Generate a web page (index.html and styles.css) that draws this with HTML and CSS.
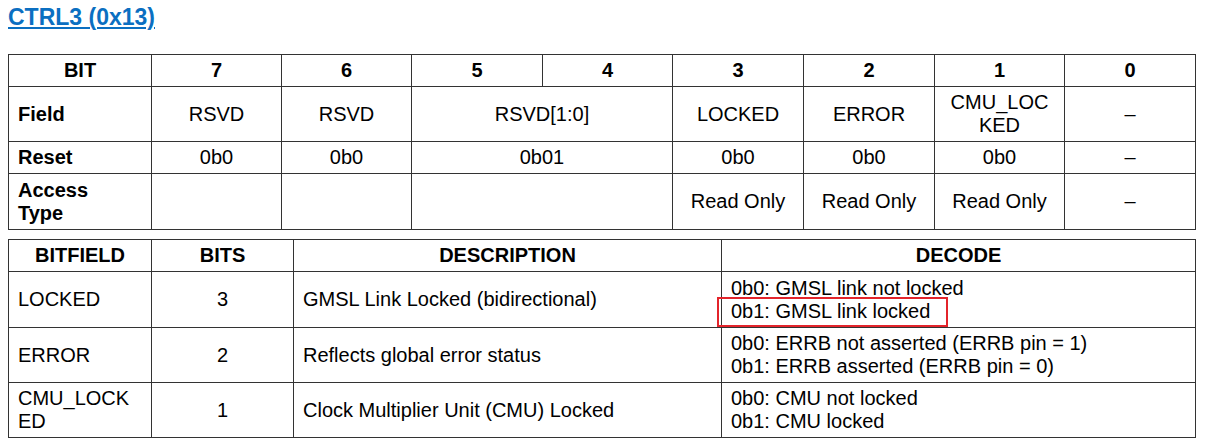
FILE: index.html
```html
<!DOCTYPE html>
<html>
<head>
<meta charset="utf-8">
<link rel="stylesheet" href="styles.css">
</head>
<body>
<div class="page">
  <h2 class="title"><a href="#">CTRL3 (0x13)</a></h2>

  <table class="reg bits">
    <colgroup>
      <col class="c-label"><col class="c130"><col class="c130"><col class="c131"><col class="c130"><col class="c131"><col class="c131"><col class="c130"><col class="c131">
    </colgroup>
    <tr class="r32 head">
      <th>BIT</th><th>7</th><th>6</th><th>5</th><th>4</th><th>3</th><th>2</th><th>1</th><th>0</th>
    </tr>
    <tr class="r55">
      <th class="lbl">Field</th><td>RSVD</td><td>RSVD</td><td colspan="2">RSVD[1:0]</td><td>LOCKED</td><td>ERROR</td><td>CMU_LOC<br>KED</td><td>–</td>
    </tr>
    <tr class="r32">
      <th class="lbl">Reset</th><td>0b0</td><td>0b0</td><td colspan="2">0b01</td><td>0b0</td><td>0b0</td><td>0b0</td><td>–</td>
    </tr>
    <tr class="r56">
      <th class="lbl">Access<br>Type</th><td></td><td></td><td colspan="2"></td><td>Read Only</td><td>Read Only</td><td>Read Only</td><td>–</td>
    </tr>
  </table>

  <table class="reg fields">
    <colgroup>
      <col class="f1"><col class="f2"><col class="f3"><col class="f4">
    </colgroup>
    <tr class="r32 head">
      <th>BITFIELD</th><th>BITS</th><th>DESCRIPTION</th><th>DECODE</th>
    </tr>
    <tr class="r56">
      <td class="left">LOCKED</td><td>3</td><td class="left">GMSL Link Locked (bidirectional)</td>
      <td class="left">0b0: GMSL link not locked<br><span class="mark">0b1: GMSL link locked</span></td>
    </tr>
    <tr class="r55">
      <td class="left">ERROR</td><td>2</td><td class="left">Reflects global error status</td>
      <td class="left">0b0: ERRB not asserted (ERRB pin = 1)<br>0b1: ERRB asserted (ERRB pin = 0)</td>
    </tr>
    <tr class="r55">
      <td class="left">CMU_LOCK<br>ED</td><td>1</td><td class="left">Clock Multiplier Unit (CMU) Locked</td>
      <td class="left">0b0: CMU not locked<br>0b1: CMU locked</td>
    </tr>
  </table>
</div>
</body>
</html>
```

FILE: styles.css
```css
html, body {
  margin: 0;
  padding: 0;
  background: #ffffff;
}

body {
  font-family: "Liberation Sans", Arial, sans-serif;
  font-size: 20px;
  color: #000000;
}

.page {
  padding: 4px 8px 0 8px;
}

.title {
  margin: 0 0 24px 0;
  font-size: 23px;
  line-height: 26px;
  font-weight: bold;
}

.title a {
  color: #0b6fc1;
  text-decoration: underline;
  text-decoration-thickness: 2px;
  text-underline-offset: 2px;
}

.reg {
  border-collapse: collapse;
  table-layout: fixed;
  width: 1188px;
}

.reg th,
.reg td {
  border: 1px solid #333333;
  padding: 0 10px;
  text-align: center;
  vertical-align: middle;
  line-height: 23px;
  font-weight: normal;
  white-space: nowrap;
}

.reg .head th {
  font-weight: bold;
}

.reg th.lbl {
  font-weight: bold;
  text-align: left;
  padding-left: 9px;
}

.reg td.left {
  text-align: left;
  padding-left: 9px;
}

.bits {
  margin-bottom: 9px;
}

.c-label { width: 143px; }
.c130 { width: 130px; }
.c131 { width: 131px; }

.f1 { width: 143px; }
.f2 { width: 142px; }
.f3 { width: 428px; }
.f4 { width: 474px; }

.r32 { height: 32px; }
.r55 { height: 55px; }
.r56 { height: 56px; }

.mark {
  position: relative;
  display: inline-block;
}

.mark::after {
  content: "";
  position: absolute;
  left: -14px;
  right: -18px;
  top: -3px;
  bottom: -4px;
  border: 2px solid #e3242b;
}
```
